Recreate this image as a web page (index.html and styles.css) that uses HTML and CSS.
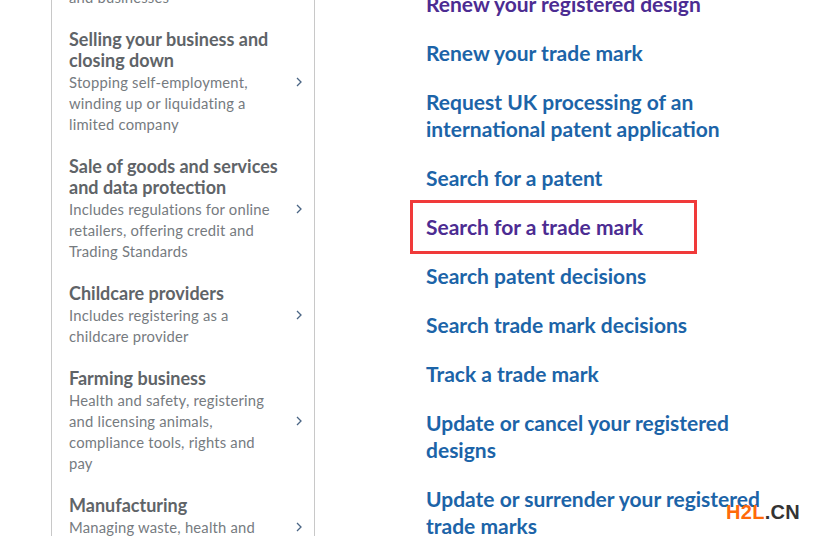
FILE: index.html
```html
<!DOCTYPE html>
<html lang="en">
  <head>
    <meta charset="UTF-8" />
    <meta name="viewport" content="width=device-width, initial-scale=1.0" />
    <title>Business and self-employed</title>
    <link rel="stylesheet" href="styles.css">
  </head>
  <body>
    <div class="page">
      <!-- topic browser, left pane -->
      <ul class="topics">
        <li class="topic">
          <div class="topic-text">
            <span class="topic-title">Business debt</span>
            <span class="topic-desc">Includes regulations for online and businesses</span>
          </div>
          <svg class="chevron" width="6" height="10" viewBox="0 0 6 10"><path d="M1 1l4 4-4 4" fill="none" stroke="currentColor" stroke-width="1.3"/></svg>
        </li>
        <li class="topic">
          <div class="topic-text">
            <span class="topic-title">Selling your business and closing down</span>
            <span class="topic-desc">Stopping self-employment, winding up or liquidating a limited company</span>
          </div>
          <svg class="chevron" width="6" height="10" viewBox="0 0 6 10"><path d="M1 1l4 4-4 4" fill="none" stroke="currentColor" stroke-width="1.3"/></svg>
        </li>
        <li class="topic">
          <div class="topic-text">
            <span class="topic-title">Sale of goods and services and data protection</span>
            <span class="topic-desc">Includes regulations for online retailers, offering credit and Trading Standards</span>
          </div>
          <svg class="chevron" width="6" height="10" viewBox="0 0 6 10"><path d="M1 1l4 4-4 4" fill="none" stroke="currentColor" stroke-width="1.3"/></svg>
        </li>
        <li class="topic">
          <div class="topic-text">
            <span class="topic-title">Childcare providers</span>
            <span class="topic-desc">Includes registering as a childcare provider</span>
          </div>
          <svg class="chevron" width="6" height="10" viewBox="0 0 6 10"><path d="M1 1l4 4-4 4" fill="none" stroke="currentColor" stroke-width="1.3"/></svg>
        </li>
        <li class="topic">
          <div class="topic-text">
            <span class="topic-title">Farming business</span>
            <span class="topic-desc">Health and safety, registering and licensing animals, compliance tools, rights and pay</span>
          </div>
          <svg class="chevron" width="6" height="10" viewBox="0 0 6 10"><path d="M1 1l4 4-4 4" fill="none" stroke="currentColor" stroke-width="1.3"/></svg>
        </li>
        <li class="topic">
          <div class="topic-text">
            <span class="topic-title">Manufacturing</span>
            <span class="topic-desc">Managing waste, health and safety</span>
          </div>
          <svg class="chevron" width="6" height="10" viewBox="0 0 6 10"><path d="M1 1l4 4-4 4" fill="none" stroke="currentColor" stroke-width="1.3"/></svg>
        </li>
      </ul>

      <!-- links, right pane -->
      <ul class="links">
        <li><a href="#" class="visited">Renew your registered design</a></li>
        <li><a href="#">Renew your trade mark</a></li>
        <li><a href="#">Request UK processing of an international patent application</a></li>
        <li><a href="#">Search for a patent</a></li>
        <li class="marked"><a href="#" class="visited">Search for a trade mark</a><span class="mark-box"></span></li>
        <li><a href="#">Search patent decisions</a></li>
        <li><a href="#">Search trade mark decisions</a></li>
        <li><a href="#">Track a trade mark</a></li>
        <li><a href="#">Update or cancel your registered designs</a></li>
        <li><a href="#">Update or surrender your registered trade marks</a></li>
      </ul>
    </div>

    <div class="watermark"><span class="wm-h2l">H2L</span>.CN</div>
  </body>
</html>
```

FILE: styles.css
```css
body {
  margin: 0;
  font-family: Lato, "Noto Sans", sans-serif;
  background-color: #fff;
  overflow: hidden;
  height: 536px;
  position: relative;
}
ul {
  list-style: none;
  margin: 0;
  padding: 0;
}
.page {
  display: grid;
  grid-template-columns: 264px 1fr;
  column-gap: 111px;
  padding-left: 51px;
  align-items: start;
}
/* left pane */
.topics {
  border-left: 1px solid #c8c8c8;
  border-right: 1px solid #c8c8c8;
  margin-top: -56px;
  padding: 0 12px 0 17px;
}
.topic {
  display: flex;
  align-items: center;
  margin-bottom: 21px;
}
.topic-text {
  width: 211px;
}
.topic-title {
  display: block;
  margin-bottom: 1px;
  font-size: 18px;
  font-weight: 700;
  line-height: 21px;
  color: #5f6468;
}
.topic-desc {
  display: block;
  font-size: 14.8px;
  line-height: 21px;
  color: #767b7f;
  letter-spacing: 0.2px;
}
.chevron {
  margin-left: auto;
  color: #4a6584;
}
/* right pane */
.links {
  margin-top: -10px;
  width: 345px;
}
.links li {
  margin-bottom: 22px;
  font-size: 21px;
  font-weight: 700;
  line-height: 27px;
}
.links a {
  color: #1c64a8;
  text-decoration: none;
}
.links a.visited {
  color: #4c2c92;
}
.marked {
  position: relative;
}
.mark-box {
  position: absolute;
  left: -16px;
  top: -13px;
  width: 281px;
  height: 48px;
  border: 3px solid #f03a3a;
}
.watermark {
  position: absolute;
  right: 13px;
  bottom: 12px;
  font-family: "Liberation Sans", Arial, sans-serif;
  font-weight: 700;
  font-size: 20px;
  color: #333;
  letter-spacing: 0.3px;
}
.wm-h2l {
  color: #ff6a0a;
}
```
